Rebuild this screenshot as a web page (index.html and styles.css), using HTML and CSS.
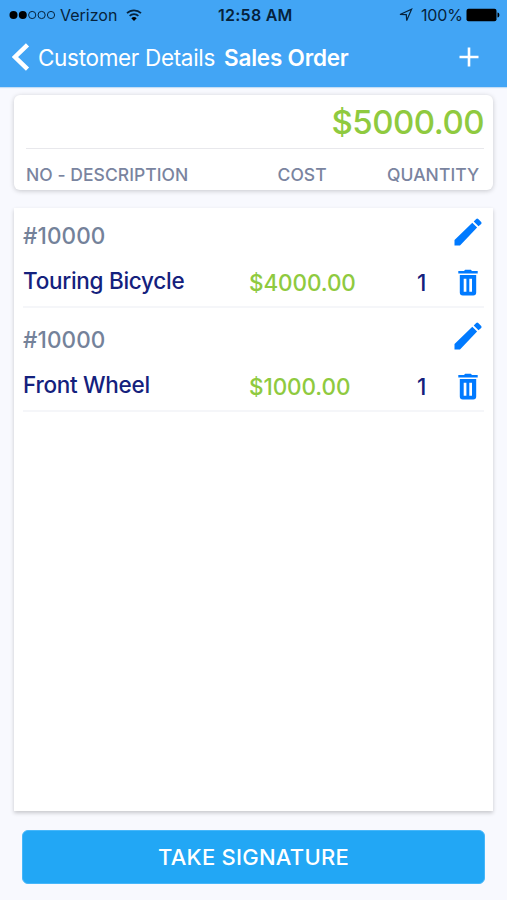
FILE: index.html
```html
<!DOCTYPE html>
<html lang="en">
<head>
<meta charset="utf-8">
<title>Sales Order</title>
<link rel="stylesheet" href="styles.css">
</head>
<body>
<svg width="0" height="0" class="defs" aria-hidden="true">
  <symbol id="pencil" viewBox="0 0 28 28"><path d="M.5 22 18.300 4.800l4.800 4.800L6 27.500H.500zM19.700 3.400 22.200.9q1-.9 2 0l3 3q.8 1 0 2L24.500 8.300z"/></symbol>
  <symbol id="trash" viewBox="0 0 20 27"><path d="M.3 2H6L7.200.8h5.600L14 2h5.700v2.600H.3z"/><path fill-rule="evenodd" d="M1.800 6h16.400v17.500a3 3 0 0 1-3 3H4.800a3 3 0 0 1-3-3zM5.700 9.800v13h2.700v-13zM11.300 9.800v13H14v-13z"/></symbol>
</svg>
<div class="screen">
  <header class="header">
    <div class="status">
      <div class="carrier">
        <svg class="signal" width="47" height="10" viewBox="0 0 47 10"><circle cx="4.500" cy="5" r="4"/><circle cx="13.800" cy="5" r="4"/><g fill="none" stroke="#06223b" stroke-width="1"><circle cx="23.200" cy="5" r="3.600"/><circle cx="32.600" cy="5" r="3.600"/><circle cx="42" cy="5" r="3.600"/></g></svg>
        <span class="verizon">Verizon</span>
        <svg class="wifi" width="16" height="12" viewBox="0 0 16 12"><g fill="none" stroke="#06223b" stroke-width="1.700"><path d="M1 4.200a10 10 0 0 1 14 0"/><path d="M3.600 6.900a6.300 6.300 0 0 1 8.800 0"/></g><path d="M8 12 5.300 9.200a3.900 3.900 0 0 1 5.400 0z"/></svg>
      </div>
      <span class="time">12:58 AM</span>
      <div class="power">
        <svg width="14" height="14" viewBox="0 0 14 14"><path d="M1 6.500 12.600 1.300 7.700 12.600 7.300 6.700z" fill="none" stroke="#06223b" stroke-width="1.200"/></svg>
        <span class="percent">100%</span>
        <svg class="battery" width="34" height="14" viewBox="0 0 34 14"><rect x=".5" y=".8" width="30" height="12.400" rx="2"/><path d="M31.500 4.500c2.500 0 2.500 5 0 5z"/></svg>
      </div>
    </div>
    <nav class="nav">
      <svg class="back" width="18" height="28" viewBox="0 0 18 28"><path d="M15.500 1.800 3 14l12.500 12.200" fill="none" stroke="#fff" stroke-width="4.500"/></svg>
      <span class="previous">Customer Details</span>
      <h1>Sales Order</h1>
      <svg class="add" width="20" height="20" viewBox="0 0 20 20"><path d="M10 .5v19M.5 10h19" stroke="#fff" stroke-width="2.600"/></svg>
    </nav>
  </header>
  <main>
    <section class="summary">
      <div class="total"><span>$5000.00</span></div>
      <div class="columns"><span>NO - DESCRIPTION</span><span>COST</span><span>QUANTITY</span></div>
    </section>
    <section class="list">
      <article class="item">
        <span class="number">#10000</span>
        <svg class="edit"><use href="#pencil"/></svg>
        <span class="name">Touring Bicycle</span><span class="cost">$4000.00</span><span class="qty">1</span>
        <svg class="delete"><use href="#trash"/></svg>
      </article>
      <article class="item">
        <span class="number">#10000</span>
        <svg class="edit"><use href="#pencil"/></svg>
        <span class="name">Front Wheel</span><span class="cost">$1000.00</span><span class="qty">1</span>
        <svg class="delete"><use href="#trash"/></svg>
      </article>
    </section>
    <button class="sign">TAKE SIGNATURE</button>
  </main>
</div>
</body>
</html>
```
FILE: styles.css
```css
* { box-sizing: border-box; }
body { margin: 0; font-family: Inter, "Liberation Sans", sans-serif; background: #f8f9fe; }
.defs { display: none; }
.screen { width: 507px; height: 900px; overflow: hidden; display: flex; flex-direction: column; }
svg { display: block; flex: none; }
span, h1 { white-space: nowrap; }
.header { height: 87px; background: #42a5f5; box-shadow: 0 1px 1px #c5def5; color: #fff; }
.status { height: 30px; display: grid; grid-template-columns: 218px 1fr auto; align-items: center; color: #06223b; fill: #000; font-size: 16px; line-height: 30px; padding-right: 7px; }
.carrier { display: flex; align-items: center; padding-left: 9px; }
.verizon { width: 57px; margin-left: 4px; }
.wifi { margin-left: 9px; }
.time { font-weight: 600; letter-spacing: .25px; }
.power { display: flex; align-items: center; }
.percent { margin-left: 8px; width: 42px; letter-spacing: -.15px; }
.battery { margin-left: 3px; }
.nav { height: 57px; display: flex; align-items: center; padding: 0 28px 3px 12px; }
.previous { font-size: 22.500px; line-height: 30px; padding-top: 2px; width: 178px; margin-left: 8px; letter-spacing: -.32px; }
h1 { margin: 0 0 0 8px; padding-top: 2px; font-size: 22.500px; line-height: 30px; font-weight: 600; letter-spacing: -.2px; }
.add { margin-left: auto; }
main { flex: 1; display: flex; flex-direction: column; padding: 8px 14px 16px; }
.summary { height: 95px; background: #fff; border-radius: 6px; padding: 0 9px 0 12px; box-shadow: 0 1px 5px rgba(0,0,0,.2); }
.total { height: 54px; border-bottom: 1px solid #e8e8ec; display: flex; justify-content: flex-end; color: #8fca3f; font-size: 33px; font-weight: 500; line-height: 54px; letter-spacing: -.5px; }
.columns { height: 41px; display: grid; grid-template-columns: 251.500px 109.500px 1fr; line-height: 52px; color: #7a849f; font-size: 17.500px; font-weight: 500; letter-spacing: .05px; }
.list { margin-top: 18px; height: 603px; background: #fff; padding: 0 9px; box-shadow: 0 2px 4px rgba(0,0,0,.2); }
.item { height: 100px; padding-top: 6px; border-bottom: 2px solid #f5f6f9; display: grid; grid-template-columns: 226px 168px 36px 1fr; grid-template-rows: 44px 48px; }
.item + .item { margin-top: 4px; }
.number { grid-column: 1 / 4; color: #74829a; font-size: 22.500px; font-weight: 450; line-height: 44px; letter-spacing: .1px; }
.edit { width: 28px; height: 28px; fill: #007aff; margin: 4px 0 0 1px; }
.name { color: #14217d; font-size: 22.500px; font-weight: 500; line-height: 46px; letter-spacing: -.28px; }
.cost { color: #8fca3f; font-size: 22.500px; font-weight: 450; line-height: 50px; letter-spacing: -.1px; }
.qty { color: #14217d; font-size: 22.500px; font-weight: 500; line-height: 50px; }
.delete { width: 20px; height: 27px; fill: #007aff; margin: 11px 0 0 5px; }
.sign { margin: 19px 8px 0; height: 54px; border: 1px solid #46b7fa; border-radius: 6px; background: #22a7f5; color: #fff; font: 500 22px Inter, sans-serif; letter-spacing: .25px; }
```
